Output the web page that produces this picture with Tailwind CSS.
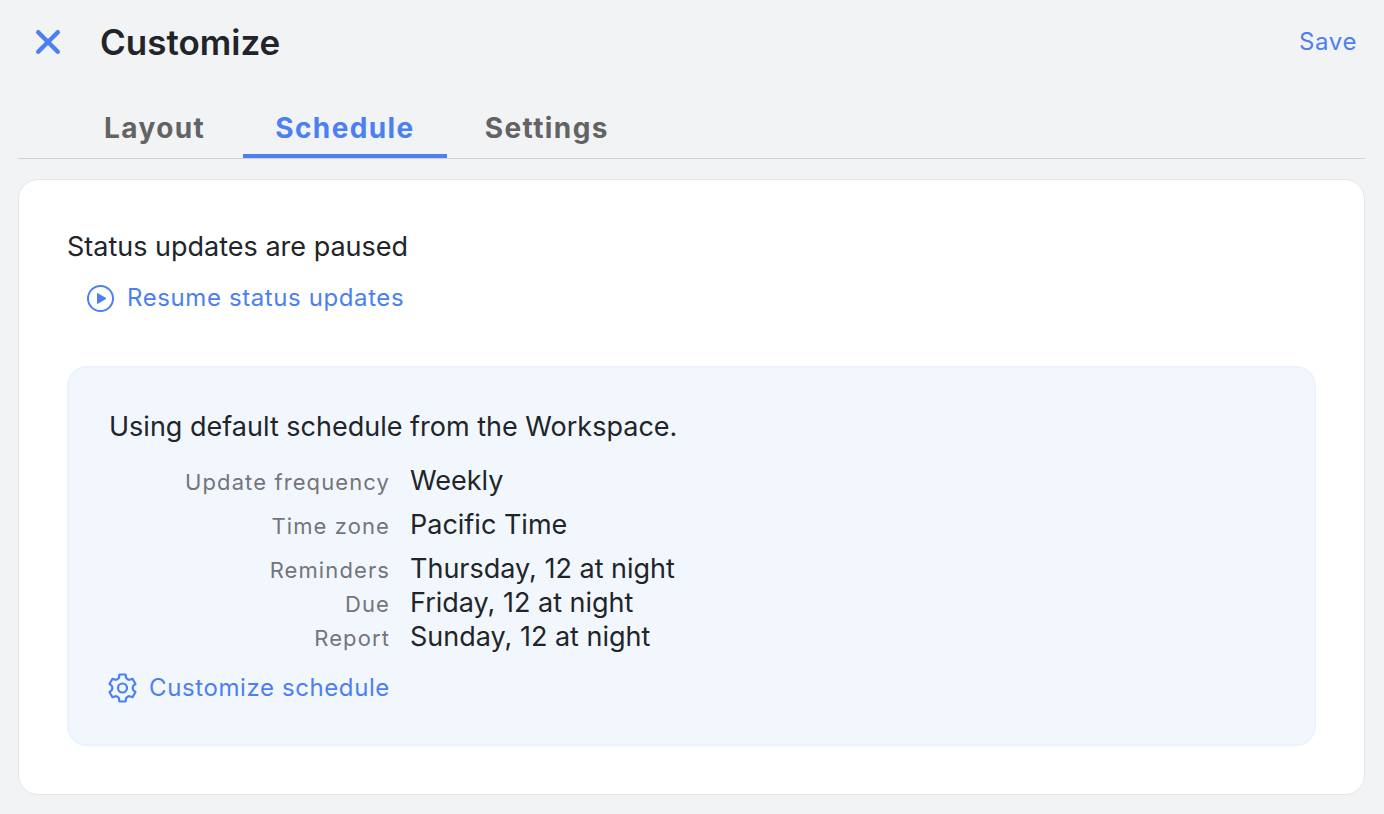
<!DOCTYPE html>
<html lang="en">
<head>
    <meta charset="UTF-8">
    <meta name="viewport" content="width=device-width, initial-scale=1.0">
    <title>Customize</title>
    <script src="https://cdn.jsdelivr.net/npm/@tailwindcss/browser@4"></script>
</head>
<body class="min-h-screen bg-[#f2f3f5] font-['Inter',sans-serif] text-[#212529] antialiased pl-[18px] pr-[19px] pb-5">
    <!-- Header -->
    <header class="flex items-center pt-4 pl-4 pr-2">
        <button type="button" aria-label="Close" class="text-[#4c80f1] cursor-pointer">
            <svg class="w-7 h-7" viewBox="0 0 28 28" fill="none" stroke="currentColor" stroke-width="4.4" stroke-linecap="round"><path d="M4.200 4.200l19.600 19.600M23.800 4.200L4.200 23.800"/></svg>
        </button>
        <h1 class="ml-[38px] text-[35px] leading-[52px] font-semibold">Customize</h1>
        <button type="button" class="ml-auto text-2xl tracking-wide text-[#4c80f1] cursor-pointer">Save</button>
    </header>

    <!-- Tabs -->
    <nav class="mt-7 flex gap-1.5 pl-[54px] border-b border-[#d0d2d6] text-[28px] leading-9 font-bold tracking-wider">
        <a href="#layout" class="px-8 pt-3.5 pb-2 text-[#636363]">Layout</a>
        <a href="#schedule" aria-current="page" class="px-8 pt-3.5 pb-2 text-[#4c80f1] border-b-4 border-[#4c80f1]">Schedule</a>
        <a href="#settings" class="px-8 pt-3.5 pb-2 text-[#636363]">Settings</a>
    </nav>

    <!-- Schedule panel -->
    <main class="mt-5 p-12 bg-white border border-[#e4e6ea] rounded-[20px]">
        <p class="text-[27px] leading-[38px]">Status updates are paused</p>
        <button type="button" class="mt-4 ml-5 flex items-center gap-3 text-2xl tracking-wide text-[#4c80f1] cursor-pointer">
            <svg class="w-7 h-7" viewBox="0 0 28 28" fill="none"><circle cx="13.500" cy="14.500" r="12.500" stroke="currentColor" stroke-width="2"/><path d="M10.500 9.500v10l8.500-5z" fill="currentColor" stroke="currentColor" stroke-linejoin="round"/></svg>
            Resume status updates
        </button>

        <section class="mt-[52px] p-10 bg-[#f2f7fe] border-2 border-[#ecf2fe] rounded-[20px]">
            <p class="text-[27px] leading-[38px]">Using default schedule from the Workspace.</p>
            <dl class="mt-[18px] grid grid-cols-[281px_1fr] gap-x-5 items-baseline text-[27px] leading-[34px]">
                <dt class="mb-2.5 text-right text-[22px] leading-7 tracking-wider text-[#737579]">Update frequency</dt>
                <dd class="mb-2.5">Weekly</dd>
                <dt class="mb-2.5 text-right text-[22px] leading-7 tracking-wider text-[#737579]">Time zone</dt>
                <dd class="mb-2.5">Pacific Time</dd>
                <dt class="text-right text-[22px] leading-7 tracking-wider text-[#737579]">Reminders</dt>
                <dd>Thursday, 12 at night</dd>
                <dt class="text-right text-[22px] leading-7 tracking-wider text-[#737579]">Due</dt>
                <dd>Friday, 12 at night</dd>
                <dt class="text-right text-[22px] leading-7 tracking-wider text-[#737579]">Report</dt>
                <dd>Sunday, 12 at night</dd>
            </dl>
            <button type="button" class="mt-[18px] flex items-center gap-3 text-2xl tracking-wide text-[#4c80f1] cursor-pointer">
                <svg class="w-[30px] h-[30px] -ml-0.5" viewBox="0 0 30 30" fill="none" stroke="currentColor" stroke-width="2.2" stroke-linejoin="round"><circle cx="15.500" cy="15" r="4.500"/><path d="M12.500 1.500h6l.6 3.300q1.200 1.800 3.430 1.980l2.990-1.030 3 5.200-2.390 2.070q-1 1.980 0 3.960l2.390 2.070-3 5.200-2.990-1.030q-2.230.18-3.430 1.980l-.6 3.300h-6l-.6-3.300q-1.200-1.800-3.430-1.980l-2.990 1.030-3-5.200 2.390-2.070q1-1.980 0-3.960L2.480 10.950l3-5.200 2.990 1.030q2.230-.18 3.430-1.980z"/></svg>
                Customize schedule
            </button>
        </section>
    </main>
</body>
</html>
